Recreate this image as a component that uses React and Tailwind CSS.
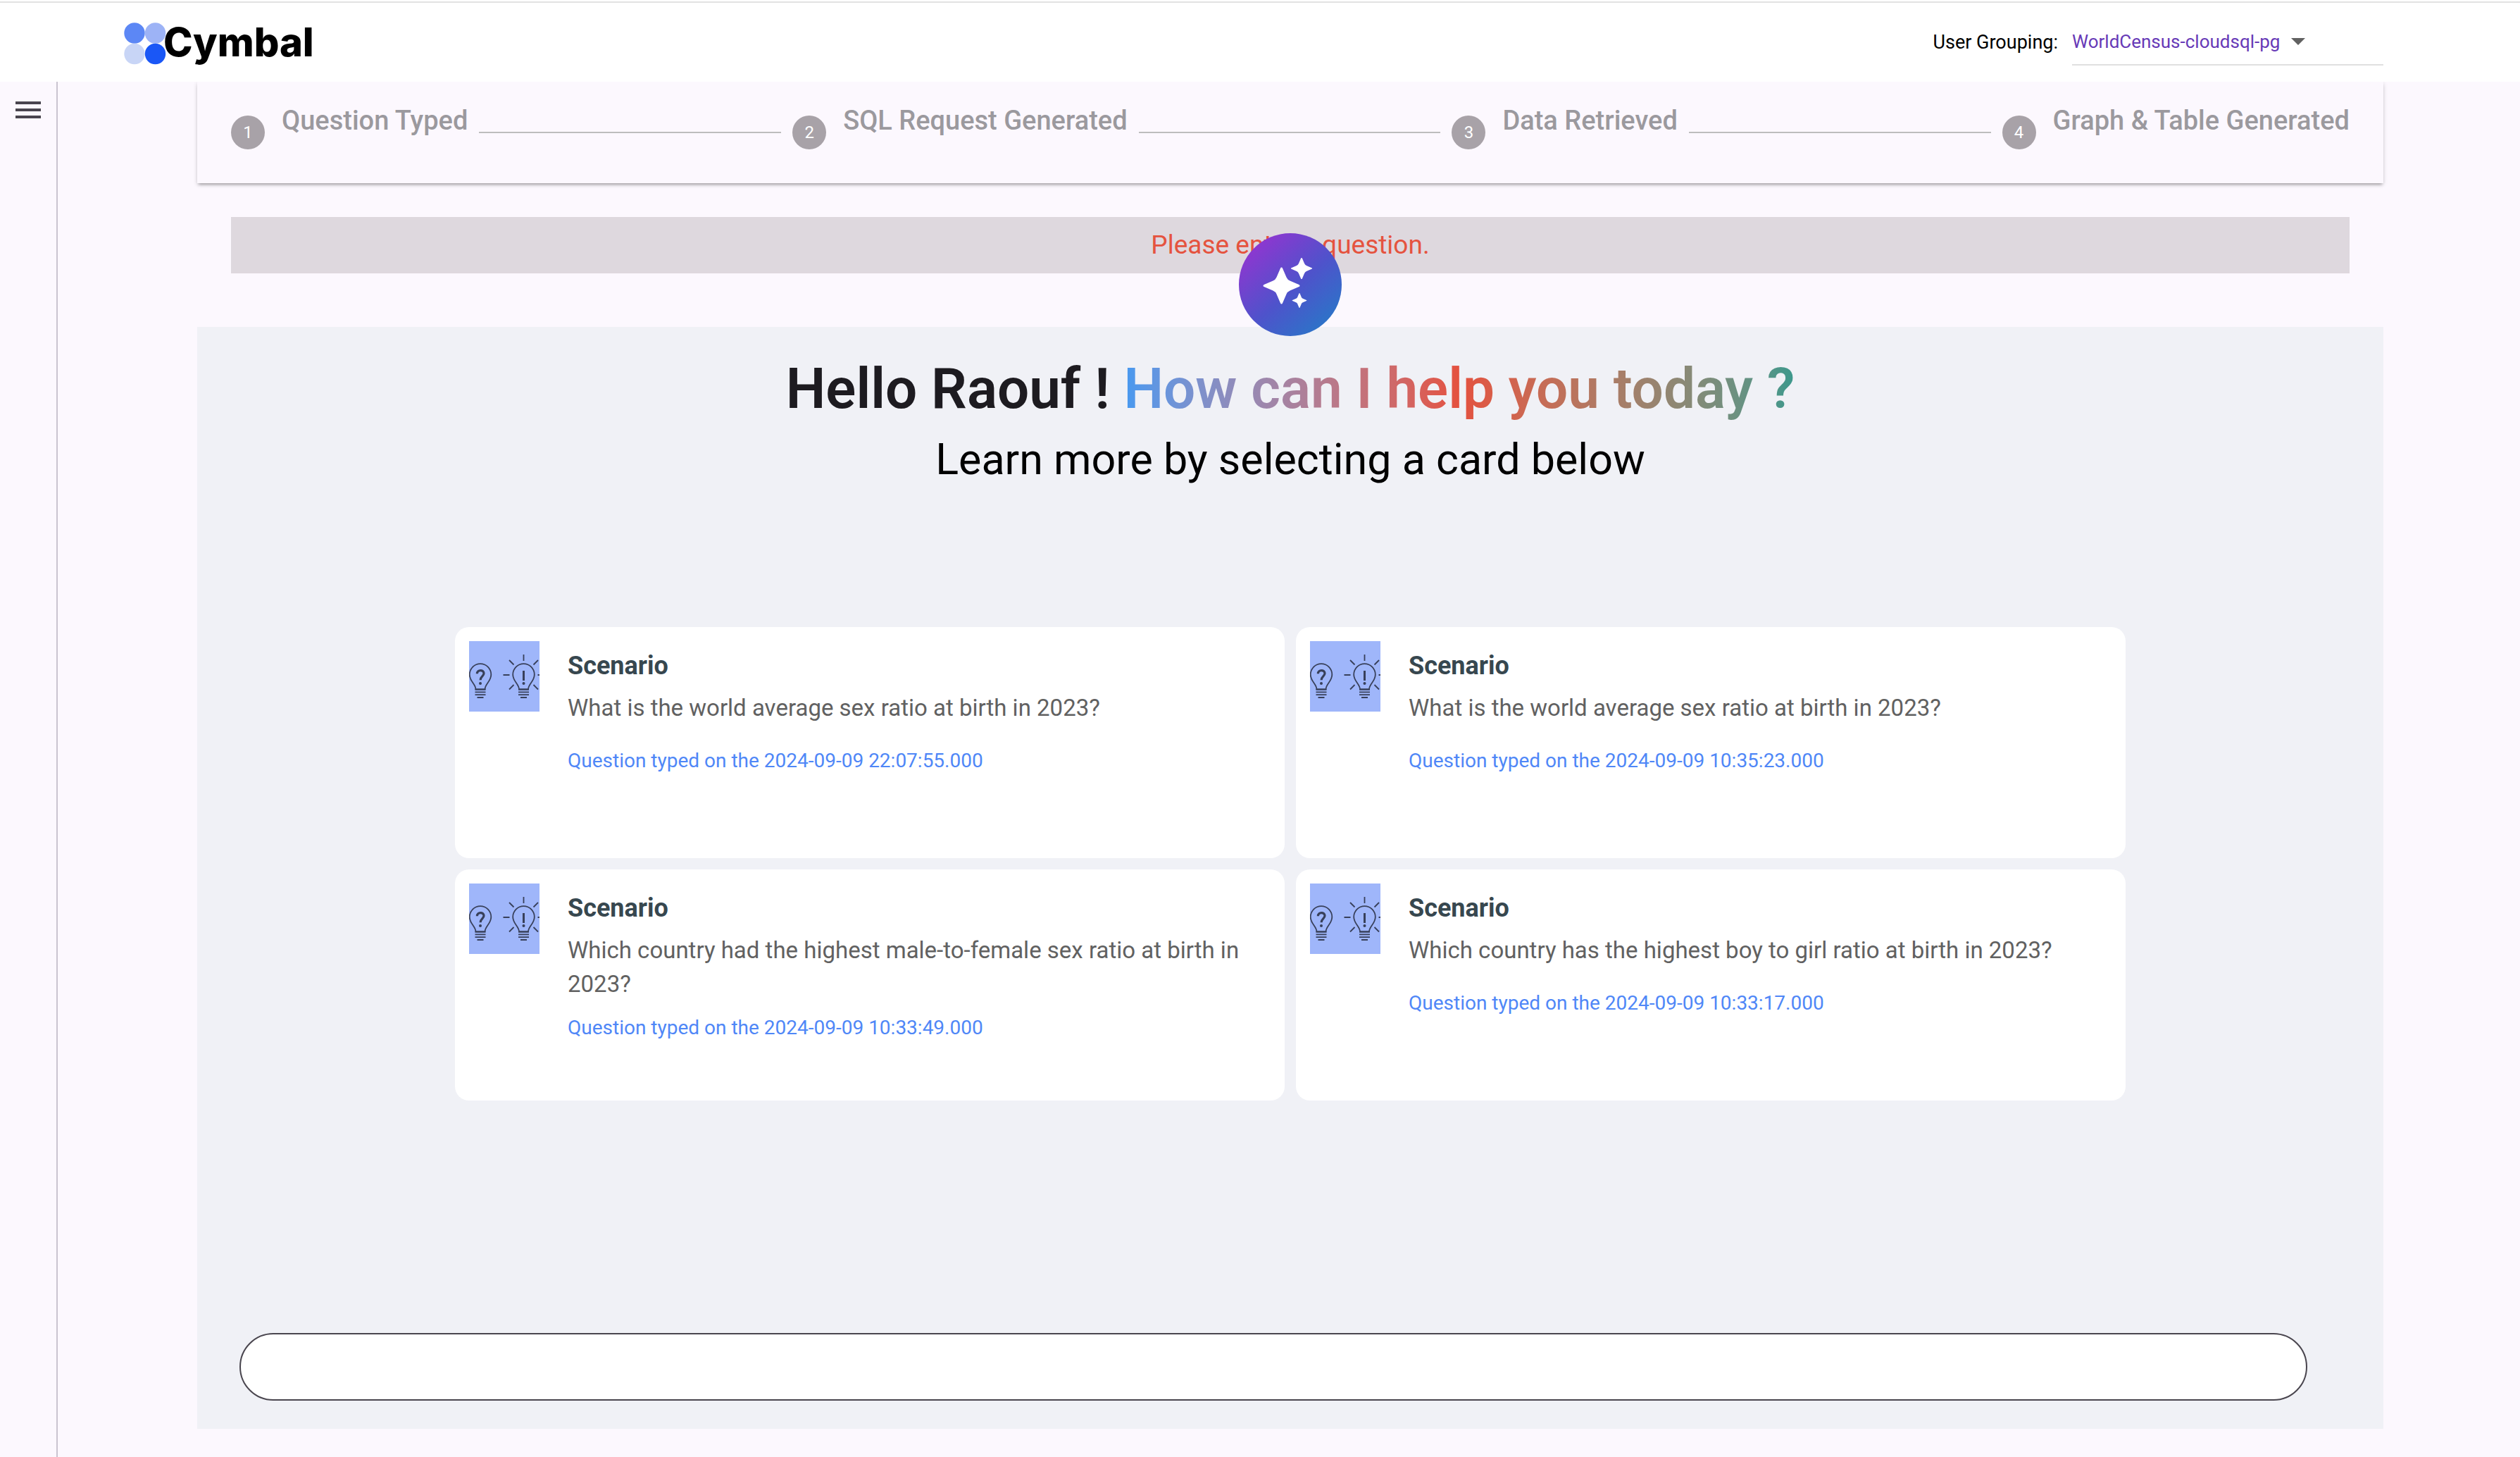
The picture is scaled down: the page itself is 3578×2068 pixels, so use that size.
const STEPS = ["Question Typed", "SQL Request Generated", "Data Retrieved", "Graph & Table Generated"];

const CARDS = [
  { question: "What is the world average sex ratio at birth in 2023?", typed: "2024-09-09 22:07:55.000" },
  { question: "What is the world average sex ratio at birth in 2023?", typed: "2024-09-09 10:35:23.000" },
  { question: "Which country had the highest male-to-female sex ratio at birth in 2023?", typed: "2024-09-09 10:33:49.000" },
  { question: "Which country has the highest boy to girl ratio at birth in 2023?", typed: "2024-09-09 10:33:17.000" },
];

function Logo() {
  return (
    <a href="#" aria-label="Cymbal" className="flex items-start">
      <svg viewBox="0 0 60 60" className="-mr-1 size-[60px]" aria-hidden="true">
        <circle cx="15" cy="15" r="14.7" fill="#5c87f5" />
        <circle cx="44.5" cy="15" r="14.7" fill="#9db3f6" />
        <circle cx="15" cy="44.5" r="14.7" fill="#c8d5f6" />
        <circle cx="44.5" cy="44.5" r="14.7" fill="#1a57f6" />
      </svg>
      <span className="font-['Inter',sans-serif] text-[56px] leading-[56px] font-extrabold text-black">Cymbal</span>
    </a>
  );
}

function Bulb() {
  return (
    <g>
      <path d="M-6.5 68.5C-6.5 61-15.3 57-15.3 47.5a15.3 15.3 0 0 1 30.6 0C15.3 57 6.5 61 6.5 68.5z" />
      <path d="M-7.5 68.5h15M-7.5 72.3h15M-7.5 76.2h15M-4.5 80h9" />
    </g>
  );
}

function ScenarioIcon() {
  return (
    <svg viewBox="0 0 100 100" className="size-[100px] shrink-0 bg-[#9fb6fa]" fill="none" stroke="#38405a" strokeWidth="1.8" aria-hidden="true">
      <g transform="translate(16 0)">
        <Bulb />
        <path strokeWidth="3.2" d="M-4.6 46.2c0-6.2 9.6-6 9.6-.4 0 4-4.9 4.200-4.900 9.400" />
        <circle cx="0" cy="60" r="2" fill="#38405a" stroke="none" />
      </g>
      <g transform="translate(77.500 0)">
        <Bulb />
        <path strokeWidth="3" d="M0 42v14" />
        <circle cx="0" cy="60" r="2" fill="#38405a" stroke="none" />
        <path d="M0 19v9M-29 48h9M20 48h9M-20.500 27l6.500 6.500M20.500 27l-6.500 6.500M-20.500 68.500l6.500-6.500M20.500 68.500l-6.500-6.500" />
      </g>
    </svg>
  );
}

function SparkleBadge() {
  const star = "M0-26Q1-26 1.500-24.800L7-12Q8.500-8.500 12-7L24.800-1.500Q26-1 26 0T24.800 1.500L12 7Q8.500 8.500 7 12L1.500 24.800Q1 26 0 26T-1.500 24.800L-7 12Q-8.500 8.500-12 7L-24.800 1.500Q-26 1-26 0T-24.800-1.500L-12-7Q-8.500-8.500-7-12L-1.500-24.800Q-1-26 0-26z";
  return (
    <svg viewBox="0 0 146 146" className="absolute -top-[133px] left-1/2 size-[146px] -translate-x-1/2" aria-hidden="true">
      <defs>
        <linearGradient id="badge" x1="0.15" y1="0.1" x2="0.85" y2="0.9">
          <stop offset="0" stopColor="#8f36d0" />
          <stop offset="0.55" stopColor="#4e53cb" />
          <stop offset="1" stopColor="#2c74c8" />
        </linearGradient>
      </defs>
      <circle cx="73" cy="73" r="73" fill="url(#badge)" />
      <g fill="#fff">
        <path d={star} transform="translate(60.500 74.500)" />
        <path d={star} transform="translate(89 50) scale(0.58)" />
        <path d={star} transform="translate(86 95.500) scale(0.4)" />
      </g>
    </svg>
  );
}

function Step({ number, label }) {
  return (
    <li className="flex shrink-0 items-start gap-6">
      <span className="mt-4 grid size-12 place-items-center rounded-full bg-[#a8a2a8] text-2xl text-white">{number}</span>
      <span className="text-[38px] leading-[46px] font-medium text-[#9b999e]">{label}</span>
    </li>
  );
}

function Card({ question, typed }) {
  return (
    <button type="button" className="flex min-h-[328px] items-start gap-10 rounded-[20px] bg-white p-5 text-left">
      <ScenarioIcon />
      <span className="block pt-[11px]">
        <span className="block text-4xl leading-12 font-bold text-[#37474f]">Scenario</span>
        <span className="mt-3 block min-h-[61px] text-[33px] leading-12 text-[#616161]">{question}</span>
        <span className="mt-[18px] block text-[28px] leading-10 text-[#4f87f7]">Question typed on the {typed}</span>
      </span>
    </button>
  );
}

export default function App() {
  return (
    <div className="flex min-h-screen flex-col bg-[#fcf8fe] font-['Roboto',sans-serif]">
      <header className="relative z-10 flex h-[116px] items-center justify-between bg-white pr-[194px] pl-44">
        <div className="absolute inset-x-0 top-[2px] h-[2px] bg-[#e2e2e2]" />
        <div className="pt-2">
          <Logo />
        </div>
        <div className="flex items-center gap-5 pt-1 text-[26px]">
          <label htmlFor="grouping" className="text-[27px] text-black">User Grouping:</label>
          <div className="flex h-[66px] w-[442px] items-center gap-4 border-b-2 border-[#e0e0e0]">
            <select id="grouping" className="appearance-none bg-transparent text-[#673ab7] [field-sizing:content]">
              <option>WorldCensus-cloudsql-pg</option>
            </select>
            <svg viewBox="0 0 20 10" className="h-[10px] w-5" aria-hidden="true">
              <path d="M0 0h20L10 10z" fill="#616161" />
            </svg>
          </div>
        </div>
      </header>

      <div className="flex grow">
        <aside className="w-[82px] shrink-0 border-r-2 border-[#cac4d0] pt-4 pl-4">
          <button type="button" aria-label="Open menu" className="block size-12">
            <svg viewBox="0 0 24 24" className="size-12" fill="#49454e" aria-hidden="true">
              <path d="M3 18h18v-2H3v2zm0-5h18v-2H3v2zm0-7v2h18V6H3z" />
            </svg>
          </button>
        </aside>

        <main className="flex grow flex-col pr-[194px] pb-10 pl-[198px]">
          <ol className="flex h-36 items-start gap-4 px-12 pt-8 shadow-[0_4px_4px_-2px_rgba(0,0,0,0.25),0_2px_6px_0_rgba(0,0,0,0.16)]">
            {STEPS.flatMap((label, i) => [
              i > 0 && <li key={"line" + i} role="presentation" className="mt-[39px] h-[2px] grow bg-[#bdbdbd]" />,
              <Step key={label} number={i + 1} label={label} />,
            ])}
          </ol>

          <p role="alert" className="mx-12 mt-12 bg-[#ded8de] text-center text-[37px] leading-20 text-[#e5533f]">
            Please enter a question.
          </p>

          <section className="relative mt-[76px] flex grow flex-col bg-[#f0f1f6] pt-10 pb-10">
            <SparkleBadge />
            <h1 className="text-center text-[80px] leading-24 font-semibold text-[#1d1b20]">
              Hello Raouf !{" "}
              <span className="bg-linear-to-r from-[#4699f0] via-[#e4513f] to-[#3b988c] bg-clip-text text-transparent">
                How can I help you today ?
              </span>
            </h1>
            <p className="mt-3 text-center text-[61px] leading-20 text-black">Learn more by selecting a card below</p>

            <div className="mx-auto mt-[198px] grid w-full max-w-[2372px] grid-cols-2 gap-4">
              {CARDS.map((card) => (
                <Card key={card.typed} {...card} />
              ))}
            </div>

            <div className="mt-auto flex pr-[108px] pl-[60px]">
              <input
                type="text"
                aria-label="Question"
                className="h-24 w-full rounded-full border-2 border-[#49454e] bg-white px-12 text-[33px] text-black outline-none"
              />
            </div>
          </section>
        </main>
      </div>
    </div>
  );
}
